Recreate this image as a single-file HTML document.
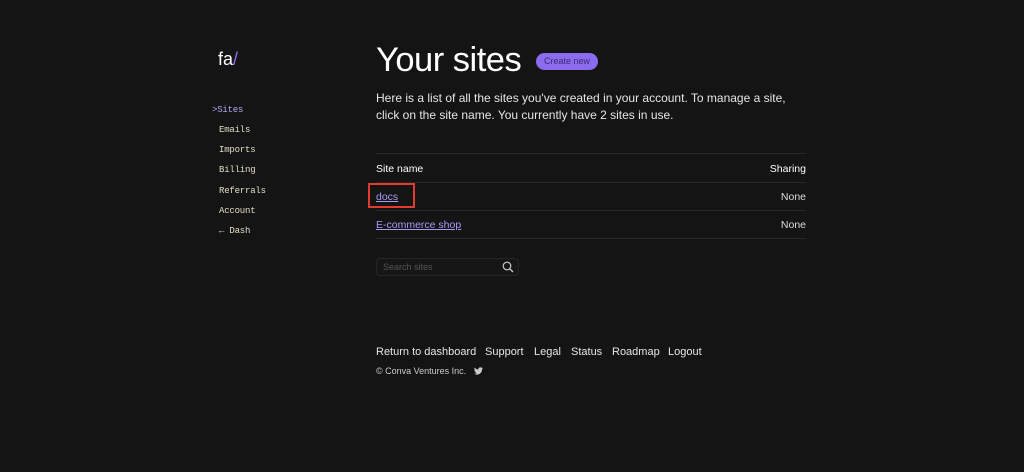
<!DOCTYPE html>
<html><head><style>
*{margin:0;padding:0;box-sizing:border-box}
body{width:1024px;height:472px;background:#141414;color:#e8e8e8;font-family:"Liberation Sans",sans-serif;position:relative;overflow:hidden}
.a{position:absolute;white-space:nowrap}
.nav{font-family:"Liberation Mono",monospace;font-size:9px;color:#e0dcc8;left:219px;letter-spacing:-0.2px}
.line{position:absolute;left:376px;width:430px;height:1px;background:#262626}
a{color:#a99af5;text-decoration:underline}
.f{font-size:11px;color:#e6e6e6}
</style></head><body>
<div class="a" style="left:218px;top:49px;font-size:18px;color:#fff">fa<span style="color:#8b6cf0">/</span></div>
<div class="a nav" style="left:212px;top:105px;color:#b3a8f0">&gt;Sites</div>
<div class="a nav" style="top:125px">Emails</div>
<div class="a nav" style="top:145px">Imports</div>
<div class="a nav" style="top:165px">Billing</div>
<div class="a nav" style="top:186px">Referrals</div>
<div class="a nav" style="top:206px">Account</div>
<div class="a nav" style="top:226px">← Dash</div>
<div class="a" style="left:376px;top:41px;font-size:34.5px;color:#fff;letter-spacing:-0.5px">Your sites</div>
<div class="a" style="left:536px;top:53px;width:62px;height:17px;border-radius:9px;background:#8b6cf0;color:#3a2d70;font-size:9px;text-align:center;line-height:17px">Create new</div>
<div class="a" style="left:376px;top:90px;font-size:12px;line-height:16.5px;color:#e6e6e6">Here is a list of all the sites you've created in your account. To manage a site,<br>click on the site name. You currently have 2 sites in use.</div>
<div class="line" style="top:153px"></div>
<div class="a" style="left:376px;top:163px;font-size:10.5px;color:#fff">Site name</div>
<div class="a" style="right:218px;top:163px;font-size:10.5px;color:#fff">Sharing</div>
<div class="line" style="top:182px"></div>
<div class="a" style="left:376px;top:191px;font-size:10.5px"><a>docs</a></div>
<div class="a" style="left:368px;top:183px;width:47px;height:25px;border:2px solid #e03c31"></div>
<div class="a" style="right:218px;top:191px;font-size:10.5px;color:#ddd">None</div>
<div class="line" style="top:210px"></div>
<div class="a" style="left:376px;top:219px;font-size:10.5px"><a>E-commerce shop</a></div>
<div class="a" style="right:218px;top:219px;font-size:10.5px;color:#ddd">None</div>
<div class="line" style="top:238px"></div>
<div class="a" style="left:376px;top:258px;width:143px;height:18px;border:1px solid #262626;border-radius:4px;background:#161616"></div>
<div class="a" style="left:383px;top:262px;font-size:9px;color:#555">Search sites</div>
<svg class="a" style="left:502px;top:261px" width="12" height="12" viewBox="0 0 12 12"><circle cx="5" cy="5" r="3.8" fill="none" stroke="#ccc" stroke-width="1.2"/><path d="M8 8L11 11" stroke="#ccc" stroke-width="1.3"/></svg>
<div class="a f" style="left:376px;top:346px">Return to dashboard</div>
<div class="a f" style="left:485px;top:346px">Support</div>
<div class="a f" style="left:534px;top:346px">Legal</div>
<div class="a f" style="left:571px;top:346px">Status</div>
<div class="a f" style="left:612px;top:346px">Roadmap</div>
<div class="a f" style="left:668px;top:346px">Logout</div>
<div class="a" style="left:376px;top:366px;font-size:9px;color:#ccc">© Conva Ventures Inc.</div>
<svg class="a" style="left:474px;top:367px" width="9" height="8" viewBox="0 0 24 20"><path fill="#ccc" d="M24 2.4a10 10 0 0 1-2.8.8A5 5 0 0 0 23.3.5a10 10 0 0 1-3.1 1.2A4.9 4.9 0 0 0 11.8 6 14 14 0 0 1 1.7.9a4.9 4.9 0 0 0 1.5 6.6A4.9 4.9 0 0 1 1 6.9a4.9 4.9 0 0 0 3.9 4.8 4.9 4.9 0 0 1-2.2.1 4.9 4.9 0 0 0 4.6 3.4A9.9 9.9 0 0 1 0 17.3 14 14 0 0 0 7.5 19.5c9 0 14-7.5 14-14v-.6A10 10 0 0 0 24 2.4z"/></svg>
</body></html>
